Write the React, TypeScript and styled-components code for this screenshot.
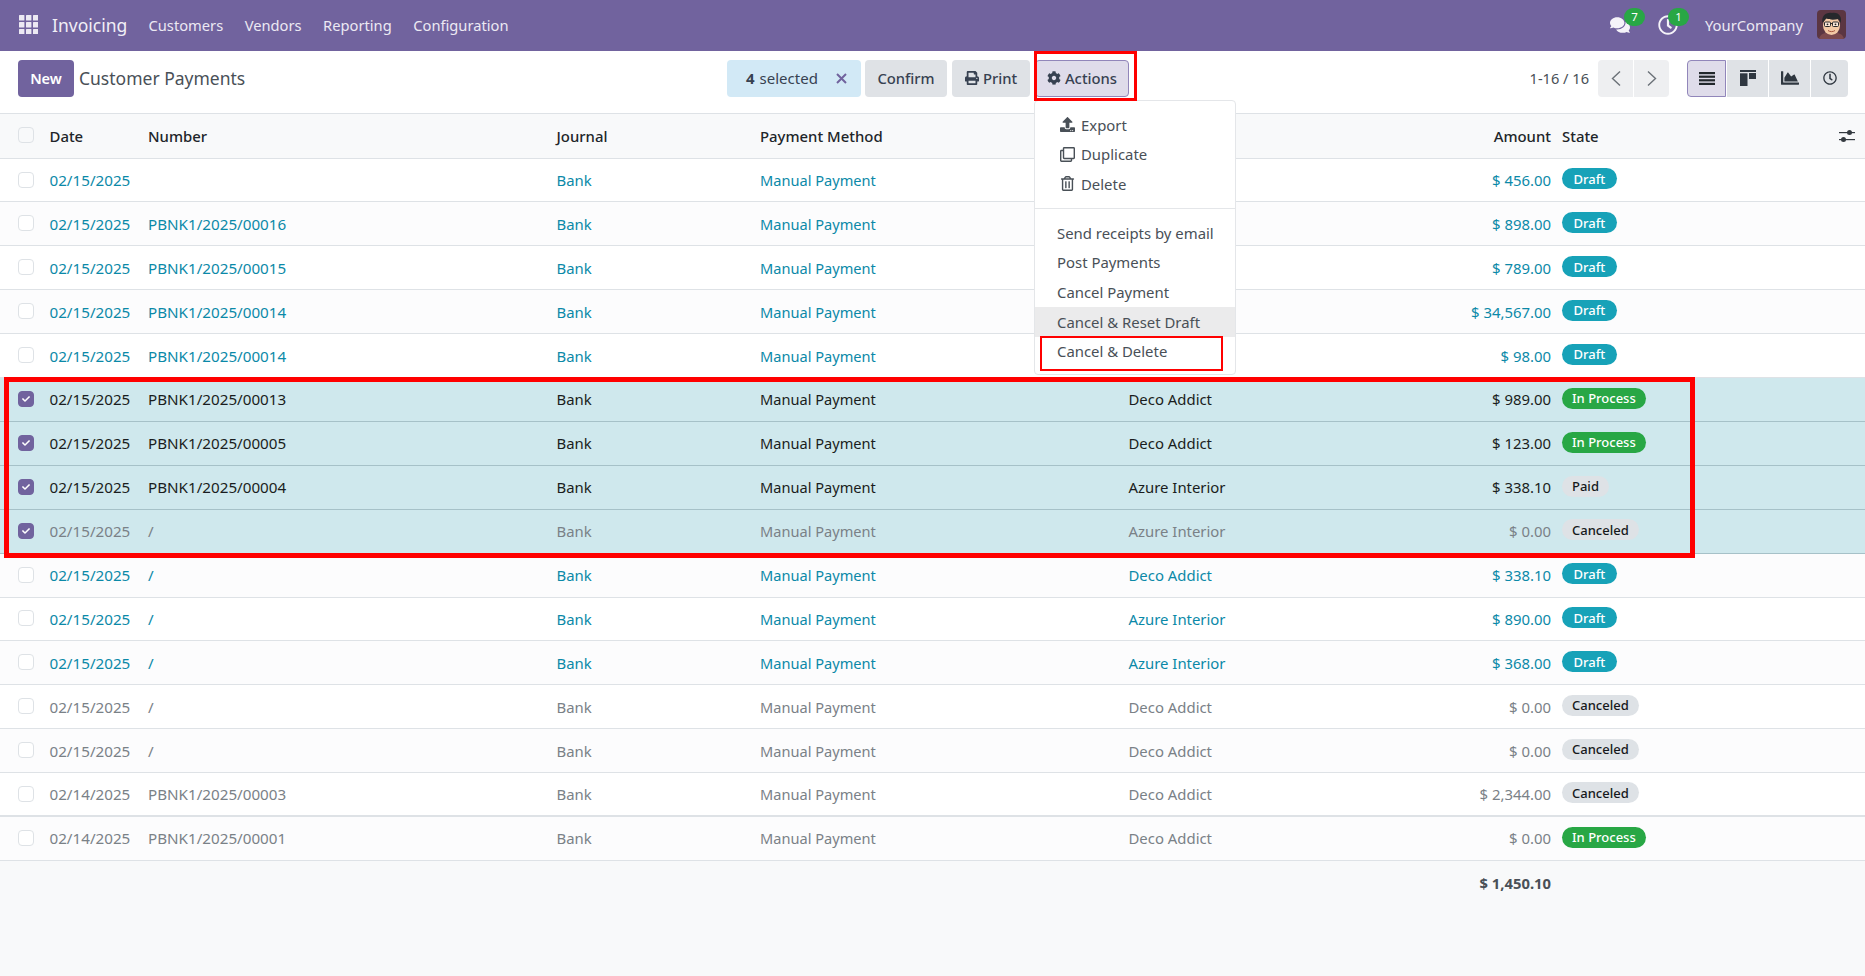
import React from "react";
import styled, { createGlobalStyle } from "styled-components";
import { FaCog, FaPrint, FaUpload, FaRegClone, FaRegTrashAlt, FaComments, FaRegClock, FaChartArea, FaCheck } from "react-icons/fa";

const Global = createGlobalStyle`
  html, body { margin: 0; padding: 0; background: #fff; }
  body { font-family: "Noto Sans", "Open Sans", sans-serif; font-size: 15px; color: #374151; }
  * { box-sizing: border-box; }
`;

const COLUMNS = "49.5px 98.5px 408.5px 203.5px 368.5px 422.5px 11px 1fr";

const Page = styled.div`
  position: relative;
  height: 976px;
  display: flex;
  flex-direction: column;
  overflow: hidden;
`;

const Navbar = styled.header`
  height: 51px;
  flex: none;
  background: #71639e;
  display: flex;
  align-items: center;
  color: #fff;
  padding: 0 19px 2px;
`;
const AppsIcon = styled.svg`
  width: 19px;
  height: 19px;
  margin-right: 14px;
`;
const Brand = styled.span`
  font-size: 17.5px;
  width: 96.5px;
  color: #f1eff6;
`;
const NavItem = styled.span`
  font-size: 14.7px;
  color: #ece9f3;
  margin-right: 21.5px;
`;
const NavRight = styled.div`
  margin-left: auto;
  display: flex;
  align-items: center;
`;
const Systray = styled.span<{ $w: number }>`
  position: relative;
  width: ${(p) => p.$w}px;
  display: flex;
  align-items: center;
  font-size: 20px;
  color: #f5f3f9;
`;
const Count = styled.span<{ $left: number }>`
  position: absolute;
  left: ${(p) => p.$left}px;
  top: -7px;
  width: 21px;
  height: 18px;
  border-radius: 9px;
  background: #28a745;
  color: #fff;
  font-size: 11.5px;
  display: flex;
  align-items: center;
  justify-content: center;
`;
const Company = styled.span`
  font-size: 14.8px;
  color: #ece9f3;
  margin-right: 14px;
`;
const Avatar = styled.svg`
  width: 29px;
  height: 29px;
  border-radius: 4px;
`;

const Panel = styled.div`
  height: 62px;
  flex: none;
  display: flex;
  align-items: center;
  padding: 0 17px 8px 18px;
`;
const NewButton = styled.button`
  width: 56px;
  height: 37px;
  border: none;
  border-radius: 4px;
  background: #71639e;
  color: #fff;
  font: 600 14.5px "Noto Sans", sans-serif;
  padding: 0;
`;
const Title = styled.span`
  font-size: 17.5px;
  color: #495057;
  margin-left: 5px;
  width: 648px;
`;
const Selected = styled.div`
  width: 134px;
  height: 37px;
  background: #d2e9f6;
  border-radius: 4px;
  display: flex;
  align-items: center;
  padding-left: 19px;
  font-size: 15px;
  color: #374151;
  margin-right: 4px;
  b { font-weight: 700; margin-right: 5px; }
  svg { margin-left: 18px; }
`;
const ActionButton = styled.button<{ $w: number; $active?: boolean }>`
  width: ${(p) => p.$w}px;
  height: 37px;
  margin-right: ${(p) => (p.$active ? 0 : 5)}px;
  border: 1px solid ${(p) => (p.$active ? "#9186ba" : "transparent")};
  border-radius: 4px;
  background: ${(p) => (p.$active ? "#dfdcea" : "#dfe2e6")};
  color: #374151;
  font: 500 14.8px "Noto Sans", sans-serif;
  display: flex;
  align-items: center;
  justify-content: center;
  gap: 4px;
  padding: 0;
`;
const Pager = styled.span`
  margin-left: auto;
  font-size: 14.6px;
  color: #495057;
  margin-right: 9px;
`;
const PagerGroup = styled.div`
  display: flex;
  gap: 1px;
  margin-right: 18px;
`;
const PagerButton = styled.div`
  width: 35px;
  height: 37px;
  background: #eeeff1;
  display: flex;
  align-items: center;
  justify-content: center;
  &:first-child { border-radius: 4px 0 0 4px; }
  &:last-child { border-radius: 0 4px 4px 0; }
`;
const ViewGroup = styled.div`
  display: flex;
  gap: 1px;
`;
const ViewButton = styled.div<{ $w: number; $active?: boolean }>`
  width: ${(p) => p.$w}px;
  height: 37px;
  background: ${(p) => (p.$active ? "#dfdcea" : "#dfe2e6")};
  border: ${(p) => (p.$active ? "1px solid #9186ba" : "none")};
  display: flex;
  align-items: center;
  justify-content: center;
  color: #2f3740;
  &:first-child { border-radius: 4px 0 0 4px; }
  &:last-child { border-radius: 0 4px 4px 0; }
`;

const Head = styled.div`
  height: 45.6px;
  flex: none;
  display: grid;
  grid-template-columns: ${COLUMNS};
  align-items: center;
  background: #f8f9fa;
  border-top: 1px solid #dee2e6;
  border-bottom: 1px solid #dee2e6;
  font-weight: 500;
  font-size: 14.9px;
  color: #212529;
`;
const Row = styled.div<{ $selected?: boolean; $even?: boolean; $tone: string; $thick?: boolean }>`
  height: 43.9px;
  flex: none;
  display: grid;
  grid-template-columns: ${COLUMNS};
  align-items: center;
  font-size: 14.9px;
  background: ${(p) => (p.$selected ? "#cfe8ed" : p.$even ? "#fcfcfd" : "#fff")};
  border-bottom: ${(p) => (p.$thick ? 2 : 1)}px solid ${(p) => (p.$selected ? "#a6c1c8" : "#dee2e6")};
  color: ${(p) => (p.$tone === "link" ? "#0b89a8" : p.$tone === "muted" ? "#7a8187" : "#1a1d20")};
`;
const CheckCell = styled.div`
  padding-left: 18px;
  display: flex;
  align-items: center;
  height: 100%;
  padding-bottom: 1px;
`;
const Check = styled.span<{ $on?: boolean; $head?: boolean }>`
  width: 16px;
  height: 16px;
  border-radius: 4px;
  border: 1px solid ${(p) => (p.$on ? "#71639e" : "#dee2e6")};
  background: ${(p) => (p.$on ? "#71639e" : p.$head ? "#f8f9fa" : "#fff")};
  display: flex;
  align-items: center;
  justify-content: center;
  color: #fff;
`;
const DateCell = styled.div`
  font-size: 15.2px;
`;
const MethodCell = styled.div`
  font-size: 14.6px;
`;
const Amount = styled.div<{ $column?: number }>`
  text-align: right;
  grid-column: ${(p) => p.$column ?? "auto"};
`;
const Badge = styled.span<{ $kind: string }>`
  display: inline-flex;
  align-items: center;
  height: 21px;
  padding: 0 ${(p) => (p.$kind === "Draft" ? 11.5 : 10)}px;
  border-radius: 11px;
  margin-bottom: 3px;
  font-size: 13px;
  font-weight: 500;
  background: ${(p) => (p.$kind === "Draft" ? "#17a2b8" : p.$kind === "In Process" ? "#28a745" : "#dee2e6")};
  color: ${(p) => (p.$kind === "Draft" || p.$kind === "In Process" ? "#fff" : "#16191c")};
`;
const Footer = styled.div`
  flex: 1;
  background: #f8f9fa;
  display: grid;
  grid-template-columns: ${COLUMNS};
  align-content: start;
  padding-top: 12px;
  font-weight: 700;
  font-size: 14.8px;
  color: #495057;
`;
const StateHead = styled.div`
  display: flex;
  align-items: center;
  justify-content: space-between;
  padding-right: 10px;
`;
const PartnerWrap = styled.div`
  display: flex;
  justify-content: space-between;
`;

const Menu = styled.div`
  position: absolute;
  left: 1034px;
  top: 100px;
  width: 202px;
  height: 275px;
  background: #fff;
  border: 1px solid #e4e6e9;
  border-radius: 4px;
  padding-top: 9px;
  color: #495057;
  font-size: 14.9px;
  z-index: 2;
`;
const MenuItem = styled.div<{ $icon?: boolean; $hover?: boolean }>`
  height: ${(p) => (p.$icon ? 29.5 : 29.7)}px;
  display: flex;
  align-items: center;
  padding-left: ${(p) => (p.$icon ? 25 : 22)}px;
  background: ${(p) => (p.$hover ? "#ebebec" : "transparent")};
  svg { margin-right: 6px; width: 15px; height: 15px; color: #495057; }
`;
const MenuDivider = styled.div`
  border-top: 1px solid #e4e6e9;
  margin: 9px 0 9.4px;
`;
const Annotation = styled.div<{ $x: number; $y: number; $w: number; $h: number; $b: number }>`
  position: absolute;
  left: ${(p) => p.$x}px;
  top: ${(p) => p.$y}px;
  width: ${(p) => p.$w}px;
  height: ${(p) => p.$h}px;
  border: ${(p) => p.$b}px solid #ff0000;
  pointer-events: none;
  z-index: 3;
`;

const B = "Bank", M = "Manual Payment", D = "Deco Addict", A = "Azure Interior";
type Payment = { tone: string; number: string; partner: string; amount: string; state: string; selected?: boolean; date: string };
const d15 = "02/15/2025";
const rows: Payment[] = [
  { tone: "link", number: "", partner: "", amount: "$ 456.00", state: "Draft", date: d15 },
  { tone: "link", number: "PBNK1/2025/00016", partner: "", amount: "$ 898.00", state: "Draft", date: d15 },
  { tone: "link", number: "PBNK1/2025/00015", partner: "", amount: "$ 789.00", state: "Draft", date: d15 },
  { tone: "link", number: "PBNK1/2025/00014", partner: "", amount: "$ 34,567.00", state: "Draft", date: d15 },
  { tone: "link", number: "PBNK1/2025/00014", partner: "", amount: "$ 98.00", state: "Draft", date: d15 },
  { tone: "dark", number: "PBNK1/2025/00013", partner: D, amount: "$ 989.00", state: "In Process", selected: true, date: d15 },
  { tone: "dark", number: "PBNK1/2025/00005", partner: D, amount: "$ 123.00", state: "In Process", selected: true, date: d15 },
  { tone: "dark", number: "PBNK1/2025/00004", partner: A, amount: "$ 338.10", state: "Paid", selected: true, date: d15 },
  { tone: "muted", number: "/", partner: A, amount: "$ 0.00", state: "Canceled", selected: true, date: d15 },
  { tone: "link", number: "/", partner: D, amount: "$ 338.10", state: "Draft", date: d15 },
  { tone: "link", number: "/", partner: A, amount: "$ 890.00", state: "Draft", date: d15 },
  { tone: "link", number: "/", partner: A, amount: "$ 368.00", state: "Draft", date: d15 },
  { tone: "muted", number: "/", partner: D, amount: "$ 0.00", state: "Canceled", date: d15 },
  { tone: "muted", number: "/", partner: D, amount: "$ 0.00", state: "Canceled", date: d15 },
  { tone: "muted", number: "PBNK1/2025/00003", partner: D, amount: "$ 2,344.00", state: "Canceled", date: "02/14/2025" },
  { tone: "muted", number: "PBNK1/2025/00001", partner: D, amount: "$ 0.00", state: "In Process", date: "02/14/2025" },
];

const Apps = () => (
  <AppsIcon viewBox="0 0 19 19" fill="#ece9f3">
    {[0, 7, 14].flatMap((y) => [0, 7, 14].map((x) => <rect key={`${x}-${y}`} x={x} y={y} width="5.4" height="5.4" rx="0.5" />))}
  </AppsIcon>
);

const Face = () => (
  <Avatar viewBox="0 0 29 29">
    <rect width="29" height="29" fill="#5b3642" />
    <path d="M2 29c1-5 6-7 12.5-7S26 24 27 29z" fill="#7c4a4e" />
    <ellipse cx="14.5" cy="15.5" rx="8.5" ry="9.5" fill="#f3c9a5" />
    <path d="M5.5 13C4 6 9 2 15 3c2-1 7 0 8 3 1.5 2 1 5 .5 7l-2-4c-4 1-9 1-12-.5C8 10 7 11 5.5 13z" fill="#26282c" />
    <rect x="7.5" y="12" width="6" height="4.5" rx="1" fill="#fbe9da" stroke="#2a2a2a" strokeWidth="1" />
    <rect x="15.5" y="12" width="6" height="4.5" rx="1" fill="#fbe9da" stroke="#2a2a2a" strokeWidth="1" />
    <path d="M13.5 13.5h2" stroke="#2a2a2a" />
    <circle cx="10.5" cy="14.3" r="0.9" fill="#222" />
    <circle cx="18.5" cy="14.3" r="0.9" fill="#222" />
    <path d="M11 20.5c2 1.5 5 1.5 7 0" stroke="#a5553f" strokeWidth="1" fill="none" />
  </Avatar>
);

const Chevron = ({ dir }: { dir: "l" | "r" }) => (
  <svg width="12" height="17" viewBox="0 0 12 17" fill="none" stroke="#6b7178" strokeWidth="1.4">
    <path d={dir === "l" ? "M10 1.5 2.5 8.5l7.5 7" : "M2 1.5l7.5 7-7.5 7"} />
  </svg>
);

const ListIcon = () => (
  <svg width="16" height="13" viewBox="0 0 16 13" fill="#22272c">
    <rect width="16" height="2.2" /><rect y="3.6" width="16" height="2.2" /><rect y="7.2" width="16" height="2.2" /><rect y="10.8" width="16" height="2.2" />
  </svg>
);
const KanbanIcon = () => (
  <svg width="16" height="16" viewBox="0 0 16 16" fill="#2f3740">
    <rect width="16" height="2" /><rect y="3.3" width="7.5" height="12.7" /><rect x="9" y="3" width="7" height="6" />
  </svg>
);
const Sliders = () => (
  <svg width="16" height="14" viewBox="0 0 16 14" fill="#343a40">
    <rect y="3" width="16" height="1.2" /><circle cx="10.5" cy="3.5" r="2.5" />
    <rect y="10" width="16" height="1.2" /><circle cx="4.5" cy="10.5" r="2.5" />
  </svg>
);

export default function App() {
  return (
    <Page>
      <Global />
      <Navbar>
        <Apps />
        <Brand>Invoicing</Brand>
        <NavItem>Customers</NavItem>
        <NavItem>Vendors</NavItem>
        <NavItem>Reporting</NavItem>
        <NavItem>Configuration</NavItem>
        <NavRight>
          <Systray $w={48}><FaComments /><Count $left={14}>7</Count></Systray>
          <Systray $w={47}><FaRegClock /><Count $left={10}>1</Count></Systray>
          <Company>YourCompany</Company>
          <Face />
        </NavRight>
      </Navbar>
      <Panel>
        <NewButton>New</NewButton>
        <Title>Customer Payments</Title>
        <Selected>
          <b>4</b>selected
          <svg width="11" height="11" viewBox="0 0 11 11" stroke="#71639e" strokeWidth="2"><path d="M1 1l9 9M10 1l-9 9" /></svg>
        </Selected>
        <ActionButton $w={82}>Confirm</ActionButton>
        <ActionButton $w={78}><FaPrint size={14} />Print</ActionButton>
        <ActionButton $w={94} $active><FaCog size={14} />Actions</ActionButton>
        <Pager>1-16 / 16</Pager>
        <PagerGroup>
          <PagerButton><Chevron dir="l" /></PagerButton>
          <PagerButton><Chevron dir="r" /></PagerButton>
        </PagerGroup>
        <ViewGroup>
          <ViewButton $w={39} $active><ListIcon /></ViewButton>
          <ViewButton $w={41}><KanbanIcon /></ViewButton>
          <ViewButton $w={41}><FaChartArea size={18} /></ViewButton>
          <ViewButton $w={37}><FaRegClock size={14} /></ViewButton>
        </ViewGroup>
      </Panel>
      <Head>
        <CheckCell><Check $head /></CheckCell>
        <div>Date</div>
        <div>Number</div>
        <div>Journal</div>
        <div>Payment Method</div>
        <Amount $column={6}>Amount</Amount>
        <div />
        <StateHead>
          <span>State</span>
          <Sliders />
        </StateHead>
      </Head>
      {rows.map((r, i) => (
        <Row key={i} $tone={r.tone} $selected={r.selected} $even={i % 2 === 1} $thick={i === 14}>
          <CheckCell><Check $on={r.selected}>{r.selected && <FaCheck size={8} />}</Check></CheckCell>
          <DateCell>{r.date}</DateCell>
          <DateCell>{r.number}</DateCell>
          <div>{B}</div>
          <MethodCell>{M}</MethodCell>
          <PartnerWrap>
            <span>{r.partner}</span>
            <span>{r.amount}</span>
          </PartnerWrap>
          <div />
          <div><Badge $kind={r.state}>{r.state}</Badge></div>
        </Row>
      ))}
      <Footer>
        <Amount $column={6}>$ 1,450.10</Amount>
      </Footer>
      <Menu>
        <MenuItem $icon><FaUpload />Export</MenuItem>
        <MenuItem $icon><FaRegClone />Duplicate</MenuItem>
        <MenuItem $icon><FaRegTrashAlt />Delete</MenuItem>
        <MenuDivider />
        <MenuItem>Send receipts by email</MenuItem>
        <MenuItem>Post Payments</MenuItem>
        <MenuItem>Cancel Payment</MenuItem>
        <MenuItem $hover>Cancel &amp; Reset Draft</MenuItem>
        <MenuItem>Cancel &amp; Delete</MenuItem>
      </Menu>
      <Annotation $x={1034} $y={51} $w={103} $h={50} $b={3} />
      <Annotation $x={1040} $y={336} $w={183} $h={35} $b={2} />
      <Annotation $x={4} $y={377} $w={1691} $h={181} $b={5} />
    </Page>
  );
}
